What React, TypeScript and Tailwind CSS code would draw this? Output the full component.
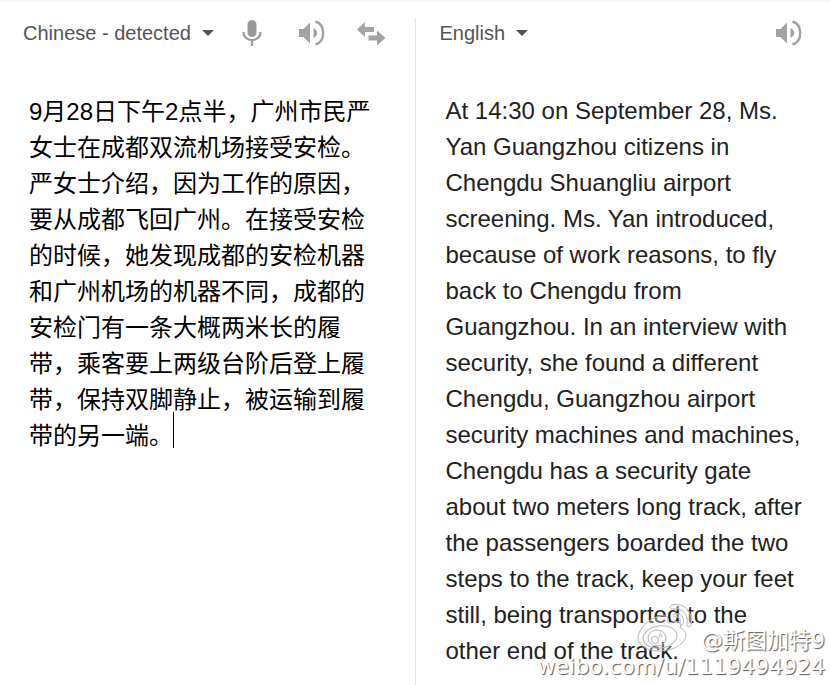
import type { ReactNode } from 'react';

const SOURCE =
  '9月28日下午2点半，广州市民严女士在成都双流机场接受安检。严女士介绍，因为工作的原因，要从成都飞回广州。在接受安检的时候，她发现成都的安检机器和广州机场的机器不同，成都的安检门有一条大概两米长的履带，乘客要上两级台阶后登上履带，保持双脚静止，被运输到履带的另一端。';

const TRANSLATION =
  'At 14:30 on September 28, Ms. Yan Guangzhou citizens in Chengdu Shuangliu airport screening. Ms. Yan introduced, because of work reasons, to fly back to Chengdu from Guangzhou. In an interview with security, she found a different Chengdu, Guangzhou airport security machines and machines, Chengdu has a security gate about two meters long track, after the passengers boarded the two steps to the track, keep your feet still, being transported to the other end of the track.';

function LanguageButton({ children }: { children: ReactNode }) {
  return (
    <button type="button" className="flex items-center gap-[11px] text-xl leading-7 text-[#555] whitespace-nowrap">
      {children}
      <svg width="12" height="6" viewBox="0 0 12 6" fill="#555" aria-hidden="true">
        <path d="M0 0h12L6 6z" />
      </svg>
    </button>
  );
}

function MicIcon() {
  return (
    <svg width="20" height="28" viewBox="0 0 20 28" fill="none" aria-hidden="true">
      <rect x="5.500" y="1" width="9" height="17" rx="4.500" fill="#999" />
      <path d="M1.500 13c0 4.700 3.500 8 8.500 8s8.500-3.300 8.500-8M10 21v6" stroke="#999" strokeWidth="2.200" />
    </svg>
  );
}

function SpeakerIcon() {
  return (
    <svg width="28" height="28" viewBox="0 0 28 28" fill="none" aria-hidden="true">
      <path d="M1 10h4.500L12 3.500v21L5.500 18H1zM15.500 9c2.200 1.200 3.800 3 3.800 5s-1.600 3.800-3.800 5z" fill="#a3a3a3" />
      <path d="M17.500 2.500C22.500 4 25.200 8.500 25.200 14s-2.700 10-7.700 11.500" stroke="#a3a3a3" strokeWidth="2.400" />
    </svg>
  );
}

function SwapIcon() {
  return (
    <svg width="30" height="28" viewBox="0 0 30 28" fill="#a3a3a3" aria-hidden="true">
      <path d="M1 10.500L9 3v5h9v5H9v5zM29.500 19L21 11.500v5h-8.500v5H21v5z" />
    </svg>
  );
}

function WeiboMark() {
  return (
    <svg width="56" height="52" viewBox="0 0 56 52" fill="none" stroke="#b5b5b5" strokeWidth="1" aria-hidden="true">
      <path
        d="M23 13C12 15 1 26 1 35c0 8 10 13 22 13s26-7 26-16c0-4-3-6-6-7 2-5-1-9-11-5-1 0-2 0-1-2 1-5-3-6-8-5z"
        fill="#fff"
        fillOpacity=".3"
      />
      <ellipse cx="23" cy="34" rx="17" ry="11" transform="rotate(-8 23 34)" />
      <ellipse cx="20" cy="35" rx="9" ry="8" />
      <circle cx="18" cy="37" r="3.500" />
      <circle cx="23.500" cy="32.500" r="1.500" />
      <path
        d="M35 2c12-3 22 7 19 20-1 3-5 2-4-1 2-9-5-17-14-15-3 0-4-3-1-4zM37 11c7-2 11 4 9 10-1 2-4 1-3-1 1-4-1-6-5-6-2 0-3-2-1-3z"
        fill="#fff"
        fillOpacity=".4"
      />
    </svg>
  );
}

export default function App() {
  return (
    <main className="min-h-screen border-t-2 border-[#f8f8f8] bg-white pt-4 font-['Liberation_Sans','Noto_Sans_CJK_SC',sans-serif]">
      <div className="relative grid min-h-[calc(100vh-18px)] grid-cols-2">
        <section className="border-r border-[#e5e5e5]">
          <header className="flex h-[30px] items-center pl-[23px]">
            <LanguageButton>Chinese - detected</LanguageButton>
            <div className="ml-7 flex items-center gap-[30px]">
              <button type="button" aria-label="Speak" className="pr-1.5"><MicIcon /></button>
              <button type="button" aria-label="Listen to source"><SpeakerIcon /></button>
              <button type="button" aria-label="Swap languages"><SwapIcon /></button>
            </div>
          </header>
          <div className="relative mt-[46px] ml-[29px] mr-10">
            <textarea
              aria-label="Source text"
              defaultValue={SOURCE}
              rows={10}
              className="block w-full resize-none overflow-hidden bg-transparent text-2xl leading-9 text-black outline-none"
            />
            <span className="absolute bottom-1.5 left-36 h-9 w-px bg-black" />
          </div>
        </section>
        <section>
          <header className="flex h-[30px] items-center justify-between pr-7 pl-6">
            <LanguageButton>English</LanguageButton>
            <button type="button" aria-label="Listen to translation"><SpeakerIcon /></button>
          </header>
          <p className="mt-[45px] mr-6 ml-[30px] text-2xl leading-9 text-[#222]">{TRANSLATION}</p>
        </section>
        <div className="pointer-events-none absolute right-1.5 bottom-1.5 flex flex-col items-end font-['DejaVu_Sans','Noto_Sans_CJK_SC',sans-serif] text-[22px] text-white [text-shadow:1px_1px_1px_#555]">
          <div className="flex items-end gap-2">
            <WeiboMark />
            <span className="leading-7">@斯图加特9</span>
          </div>
          <span className="leading-6">weibo.com/u/1119494924</span>
        </div>
      </div>
    </main>
  );
}
